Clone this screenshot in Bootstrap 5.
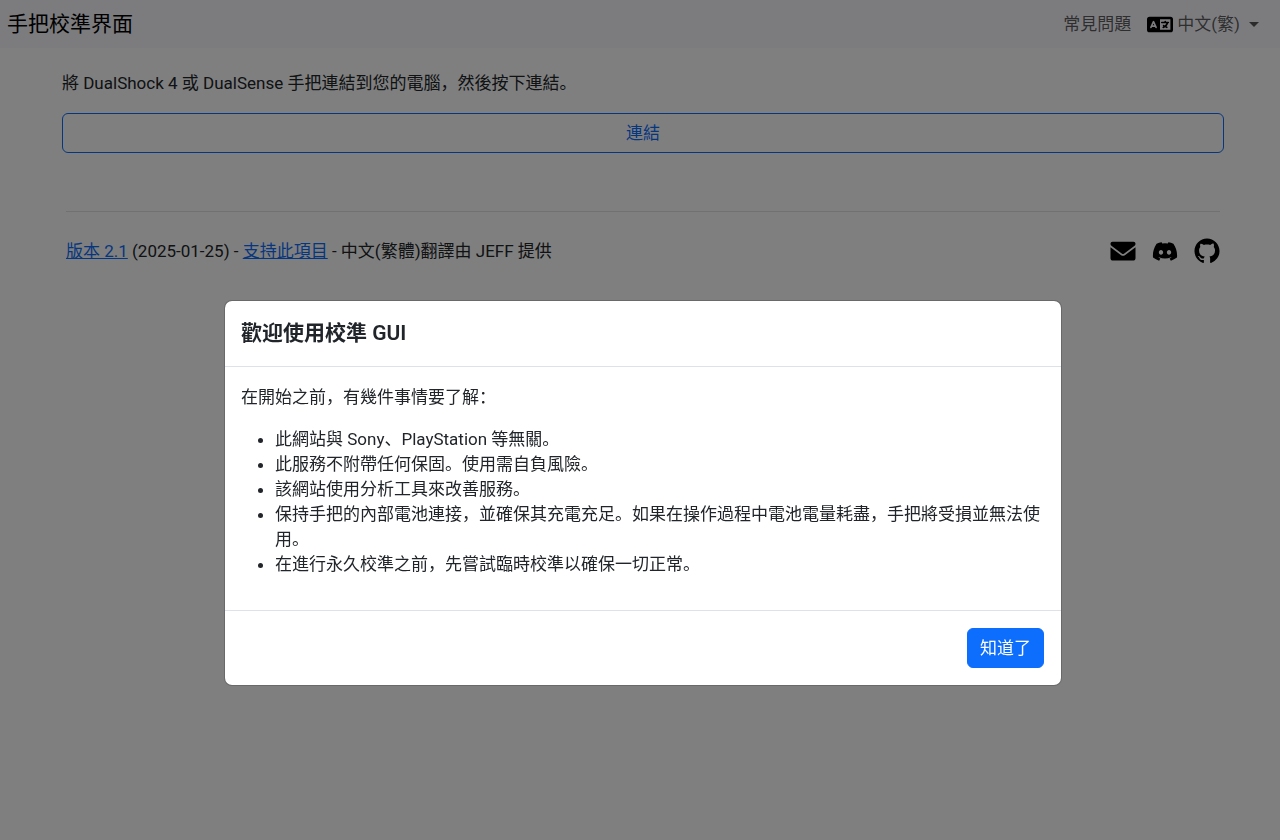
<!DOCTYPE html>
<html lang="zh">
<head>
<meta charset="utf-8">
<meta name="viewport" content="width=device-width, initial-scale=1">
<title>手把校準界面</title>
<link href="https://cdn.jsdelivr.net/npm/bootstrap@5.3.0/dist/css/bootstrap.min.css" rel="stylesheet">
<style>
  body { font-family: Roboto, "Noto Sans CJK SC", sans-serif; font-size: 17px; line-height: 25px; }
  p { margin-bottom: 17px; }
  .site-bar { background: ghostwhite; padding: 0 13px 0 7px; height: 48px; }
  .site-bar .navbar-brand { font-size: 21px; }
  .site-bar .nav-link { color: rgba(0,0,0,.65); }
  .site-bar .dropdown-toggle::after { margin-left: 9px; border-top-width: 5px; border-left-width: 5px; border-right-width: 5px; }
  .page-body { padding: 23px 56px 0 62px; }
  .btn { font-size: 17px; line-height: 26px; padding: 6px 12px; border-radius: 6px; }
  .site-foot { margin: 58px 4px 0; padding-top: 26px; }
  .notice { padding-left: 6px; }
  .notice-dialog { max-width: 838px; margin-top: 300px; }
  .notice .modal-title { font-size: 21px; line-height: 33px; font-weight: 600; }
  .notice .modal-body { padding: 18px 16px 16px; }
  .notice ul { padding-left: 34px; margin-bottom: 17px; }
  .notice .modal-footer { padding: 13px; }
</style>
</head>
<body>
<nav class="navbar navbar-expand site-bar">
  <a class="navbar-brand me-auto py-0" href="#">手把校準界面</a>
  <ul class="navbar-nav align-items-center">
    <li class="nav-item"><a class="nav-link" href="#">常見問題</a></li>
    <li class="nav-item dropdown">
      <a class="nav-link dropdown-toggle d-flex align-items-center" href="#" role="button" data-bs-toggle="dropdown" aria-expanded="false">
        <svg class="me-1" width="26" height="21" viewBox="0 0 640 512" fill="#000" aria-hidden="true"><path fill-rule="evenodd" d="M64 64H576a64 64 0 0 1 64 64V384a64 64 0 0 1-64 64H64a64 64 0 0 1-64-64V128a64 64 0 0 1 64-64zM320 128V384H576V128zM178 176q-18-22-36 0L78 320q-7 18 10 26 18 8 27-9l9-21h72l9 21q9 17 27 9 17-8 10-26zM160 233l19 43h-38z"/><path d="M448 164a20 20 0 0 1 20 20v4h56a20 20 0 0 1 0 40h-2l-2 5c-9 24-23 47-41 65l22 13a20 20 0 0 1-20 34c-12-7-24-15-35-23-11 8-22 16-34 23l-4 2a20 20 0 0 1-18-36l12-6-10-10a20 20 0 0 1 28-28l14 14a150 150 0 0 0 44-53H364a20 20 0 0 1 0-40h64v-4a20 20 0 0 1 20-20z"/></svg>
        中文(繁)
      </a>
    </li>
  </ul>
</nav>
<main class="page-body">
  <p>將 DualShock 4 或 DualSense 手把連結到您的電腦，然後按下連結。</p>
  <button type="button" class="btn btn-outline-primary w-100">連結</button>
  <footer class="site-foot border-top d-flex justify-content-between align-items-center">
    <p class="mb-0"><a href="#">版本 2.1</a> (2025-01-25) - <a href="#">支持此項目</a> - 中文(繁體)翻譯由 JEFF 提供</p>
    <div class="d-flex gap-3 align-items-center">
      <a class="link-dark lh-1" href="#" aria-label="Email"><svg width="26" height="26" viewBox="-10 -12 532 532" fill="#000"><path d="M40 64C18 64 0 82 0 104c0 18 7 34 19.200 43L236.800 310c11.400 8.500 27 8.500 38.400 0L492.800 147c12.100-9 19.200-25 19.200-43 0-22-18-40-40-40H40zM0 176V400c0 26 22 48 48 48H464c26 0 48-22 48-48V176L294.400 339.200c-22.800 17.100-54 17.100-76.800 0L0 176z"/></svg></a>
      <a class="link-dark lh-1" href="#" aria-label="Discord"><svg width="26" height="26" viewBox="-0.600 -0.900 17.200 17.200" fill="#000"><path d="M13.545 2.907a13.227 13.227 0 0 0-3.257-1.011.05.05 0 0 0-.052.025c-.141.25-.297.577-.406.833a12.190 12.190 0 0 0-3.658 0 8.258 8.258 0 0 0-.412-.833.051.051 0 0 0-.052-.025c-1.125.194-2.220.534-3.257 1.011a.041.041 0 0 0-.021.018C.356 6.024-.213 9.047.066 12.032c.001.014.010.028.021.037a13.276 13.276 0 0 0 3.995 2.020.05.05 0 0 0 .056-.019c.308-.420.582-.863.818-1.329a.05.05 0 0 0-.028-.070 8.735 8.735 0 0 1-1.248-.595.05.05 0 0 1-.005-.085c.084-.063.168-.129.248-.195a.050.050 0 0 1 .051-.007c2.619 1.196 5.454 1.196 8.041 0a.052.052 0 0 1 .053.007c.080.066.164.132.248.195a.051.051 0 0 1-.004.085c-.399.233-.813.431-1.249.594a.050.050 0 0 0-.027.071c.240.466.514.909.817 1.329a.050.050 0 0 0 .056.019 13.235 13.235 0 0 0 4.001-2.020.049.049 0 0 0 .021-.037c.334-3.451-.559-6.449-2.366-9.106a.034.034 0 0 0-.020-.019zM5.347 10.214c-.789 0-1.438-.724-1.438-1.612 0-.889.637-1.613 1.438-1.613.807 0 1.450.730 1.438 1.613 0 .888-.637 1.612-1.438 1.612zM10.663 10.214c-.788 0-1.438-.724-1.438-1.612 0-.889.637-1.613 1.438-1.613.807 0 1.451.730 1.438 1.613 0 .888-.631 1.612-1.438 1.612z"/></svg></a>
      <a class="link-dark lh-1" href="#" aria-label="GitHub"><svg width="26" height="26" viewBox="-0.300 -0.300 16.600 16.600" fill="#000"><path d="M8 0C3.580 0 0 3.580 0 8c0 3.540 2.290 6.530 5.470 7.590.4.070.55-.17.55-.38 0-.19-.01-.82-.01-1.490-2.010.37-2.530-.49-2.690-.94-.09-.23-.48-.94-.82-1.130-.28-.15-.68-.52-.01-.53.63-.01 1.080.58 1.230.82.72 1.210 1.870.87 2.330.66.07-.52.28-.87.51-1.070-1.780-.2-3.640-.89-3.640-3.950 0-.87.31-1.590.82-2.150-.08-.2-.36-1.020.08-2.120 0 0 .67-.21 2.200.82.64-.18 1.320-.27 2-.27s1.360.09 2 .27c1.530-1.040 2.200-.82 2.200-.82.44 1.100.16 1.920.08 2.120.51.56.82 1.270.82 2.150 0 3.070-1.870 3.750-3.650 3.950.29.25.54.73.54 1.480 0 1.070-.01 1.930-.01 2.200 0 .21.15.46.55.38A8.010 8.010 0 0 0 16 8c0-4.420-3.580-8-8-8z"/></svg></a>
    </div>
  </footer>
</main>

<div class="modal-backdrop show"></div>
<div class="modal show d-block notice" tabindex="-1" role="dialog" aria-modal="true" aria-labelledby="noticeTitle">
  <div class="modal-dialog notice-dialog">
    <div class="modal-content">
      <div class="modal-header">
        <h1 class="modal-title" id="noticeTitle">歡迎使用校準 GUI</h1>
      </div>
      <div class="modal-body">
        <p>在開始之前，有幾件事情要了解：</p>
        <ul>
          <li>此網站與 Sony、PlayStation 等無關。</li>
          <li>此服務不附帶任何保固。使用需自負風險。</li>
          <li>該網站使用分析工具來改善服務。</li>
          <li>保持手把的內部電池連接，並確保其充電充足。如果在操作過程中電池電量耗盡，手把將受損並無法使用。</li>
          <li>在進行永久校準之前，先嘗試臨時校準以確保一切正常。</li>
        </ul>
      </div>
      <div class="modal-footer">
        <button type="button" class="btn btn-primary">知道了</button>
      </div>
    </div>
  </div>
</div>
<script src="https://cdn.jsdelivr.net/npm/bootstrap@5.3.0/dist/js/bootstrap.bundle.min.js"></script>
</body>
</html>
